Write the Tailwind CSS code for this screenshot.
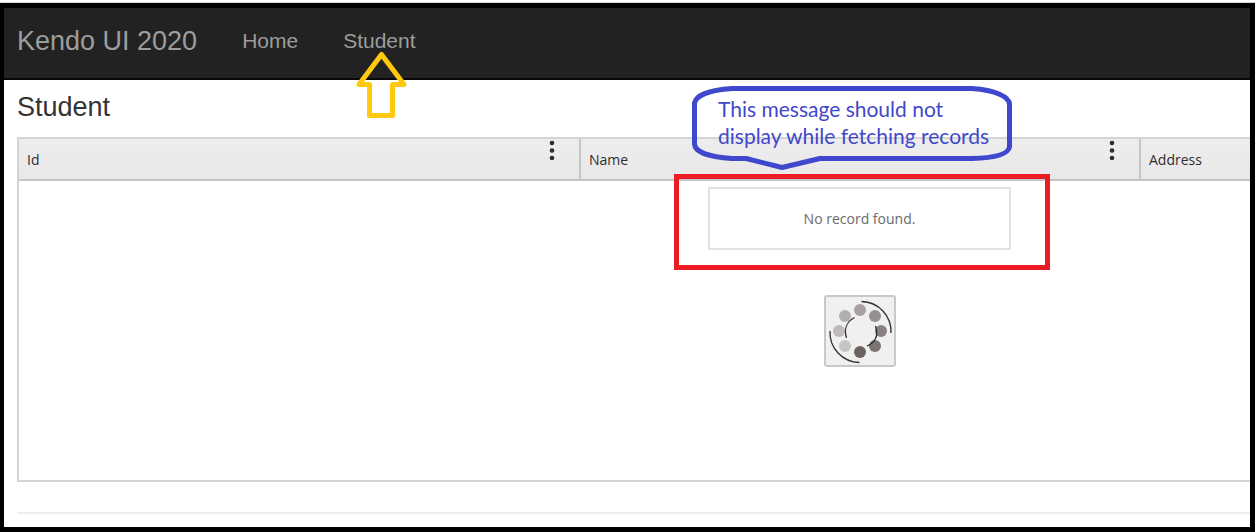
<!DOCTYPE html>
<html lang="en">

<head>
  <meta charset="UTF-8">
  <meta name="viewport" content="width=device-width, initial-scale=1.0">
  <title>Student - Kendo UI 2020</title>
  <script src="https://cdn.jsdelivr.net/npm/@tailwindcss/browser@4"></script>
</head>

<body class="bg-white font-['Liberation_Sans',Arial,sans-serif] text-[#333]">
  <div class="relative flex min-h-screen flex-col overflow-hidden pt-[2px]">
    <div class="flex grow flex-col overflow-hidden border-t border-[#d5d5d5]">
      <div class="flex grow flex-col overflow-hidden border-t-5 border-r-5 border-b-5 border-l-4 border-black">

        <nav class="flex h-[72px] items-center border-b-2 border-[#080808] bg-[#222] pb-1 pl-[13px] text-[#9d9d9d]">
          <a href="#" class="text-[27px] leading-8">Kendo UI 2020</a>
          <a href="#" class="ml-[45px] text-[21px] leading-8">Home</a>
          <a href="#" class="ml-[45px] text-[21px] leading-8">Student</a>
        </nav>

        <main class="pl-[13px]">
          <h2 class="pt-[11px] pb-[14px] text-[27px] leading-8">Student</h2>

          <!-- grid -->
          <div class="overflow-hidden border-y-2 border-l-2 border-[#d5d5d5] font-['Open_Sans',sans-serif] text-sm">
            <table class="w-[1682px] table-fixed border-separate border-spacing-0 bg-linear-to-b from-[#eeedee] to-[#e9e7e8] text-[#2e2e2e]">
              <thead>
                <tr>
                  <th class="w-[560px] border-b-2 border-[#c5c5c5] p-0 text-left font-normal">
                    <div class="flex h-10 justify-between pr-[23px] pl-2">
                      <span class="pt-[11px] leading-5">Id</span>
                      <button type="button" aria-label="Id column menu" class="h-6 w-2">
                        <svg class="h-6 w-2" viewBox="0 0 8 24" fill="#2e2e2e"><circle cx="4" cy="4" r="2.3"/><circle cx="4" cy="11.500" r="2.3"/><circle cx="4" cy="19" r="2.3"/></svg>
                      </button>
                    </div>
                  </th>
                  <th class="w-[560px] border-b-2 border-l-2 border-[#c5c5c5] p-0 text-left font-normal">
                    <div class="flex h-10 justify-between pr-[23px] pl-2">
                      <span class="pt-[11px] leading-5">Name</span>
                      <button type="button" aria-label="Name column menu" class="h-6 w-2">
                        <svg class="h-6 w-2" viewBox="0 0 8 24" fill="#2e2e2e"><circle cx="4" cy="4" r="2.3"/><circle cx="4" cy="11.500" r="2.3"/><circle cx="4" cy="19" r="2.3"/></svg>
                      </button>
                    </div>
                  </th>
                  <th class="border-b-2 border-l-2 border-[#c5c5c5] p-0 text-left font-normal">
                    <div class="flex h-10 justify-between pr-[23px] pl-2">
                      <span class="pt-[11px] leading-5">Address</span>
                      <button type="button" aria-label="Address column menu" class="h-6 w-2">
                        <svg class="h-6 w-2" viewBox="0 0 8 24" fill="#2e2e2e"><circle cx="4" cy="4" r="2.3"/><circle cx="4" cy="11.500" r="2.3"/><circle cx="4" cy="19" r="2.3"/></svg>
                      </button>
                    </div>
                  </th>
                </tr>
              </thead>
            </table>
            <div class="flex min-h-[299px] w-[1681px] flex-col items-center pt-[6px]">
              <div class="flex h-[63px] w-[303px] items-center justify-center border-2 border-[#e1e1e1] text-[#6a6a6a]">No record found.</div>
              <!-- loader -->
              <svg class="mt-[45px] size-[72px]" viewBox="0 0 72 72">
                <rect x="1" y="1" width="70" height="70" rx="2" fill="#f0f0f0" stroke="#c9c9c9" stroke-width="2"/>
                <g>
                  <circle cx="36" cy="15" r="6" fill="#a8a1a0"/>
                  <circle cx="51" cy="21" r="6" fill="#979090"/>
                  <circle cx="57" cy="36" r="6" fill="#89817f"/>
                  <circle cx="51" cy="51" r="6" fill="#7b7370"/>
                  <circle cx="36" cy="57" r="6" fill="#6c6361"/>
                  <circle cx="21" cy="51" r="6" fill="#c7c4c4"/>
                  <circle cx="15" cy="36" r="6" fill="#bebaba"/>
                  <circle cx="21" cy="21" r="6" fill="#b3aeae"/>
                </g>
                <g fill="none" stroke="#2f2f2f" stroke-width="1.300">
                  <path d="M37.500 6.500A30 30 0 0 1 67 38"/>
                  <path d="M6 36A30 30 0 0 0 35.500 67.500"/>
                  <path d="M30.500 22.500C22 27 20 35 22.500 43"/>
                  <path d="M51.500 31C54.500 40 52 47 43 51"/>
                </g>
              </svg>
            </div>
          </div>

          <hr class="mt-[30px] border-t-2 border-[#eee]">
        </main>
      </div>
    </div>

    <!-- annotations -->
    <svg class="absolute top-[50px] left-[354px] h-[70px] w-[56px]" viewBox="0 0 56 70" fill="none" stroke="#ffc90e" stroke-width="5" stroke-linejoin="round" stroke-linecap="round">
      <path d="M27.500 4.500L5 34.500H15.500V65.500H38.500V34.500H50Z"/>
    </svg>
    <div class="absolute top-[174px] left-[674px] h-24 w-[376px] border-5 border-[#ed1c24]"></div>
    <div class="absolute top-[84px] left-[690px] h-[90px] w-[324px]">
      <svg class="absolute inset-0 h-[90px] w-[324px]" viewBox="0 0 324 90" fill="none" stroke="#3f48cc" stroke-width="5" stroke-linejoin="round">
        <path d="M42 4.500H282C306 6 319 13 319.500 20V63C318 70 306 74 282 74.500H130L92 83.500L56 74.500H42C18 73 5 68 4.500 60V19C6 12 18 6 42 4.500Z"/>
      </svg>
      <p class="relative pt-[11px] pl-7 font-[Lato,sans-serif] text-[21px] leading-[27px] whitespace-nowrap text-[#3f48cc]">This message should not<br>display while fetching records</p>
    </div>
  </div>
</body>

</html>
